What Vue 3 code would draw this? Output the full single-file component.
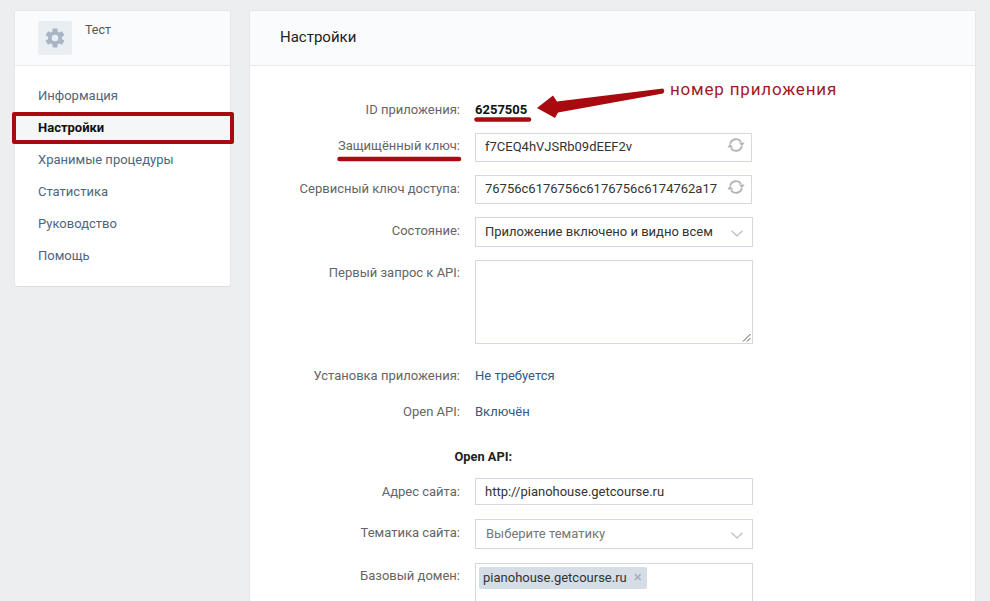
<script setup>
const nav = [
  { label: 'Информация' },
  { label: 'Настройки', active: true },
  { label: 'Хранимые процедуры' },
  { label: 'Статистика' },
  { label: 'Руководство' },
  { label: 'Помощь' },
]
</script>

<template>
  <div class="page">
    <aside class="side">
      <div class="side-head">
        <div class="app-icon">
          <svg width="20" height="20" viewBox="0 0 18 18">
            <g fill="#a8b5c4">
              <rect x="6.800" y="0.500" width="4.400" height="17" rx=".6"/>
              <rect x="6.800" y="0.500" width="4.400" height="17" rx=".6" transform="rotate(60 9 9)"/>
              <rect x="6.800" y="0.500" width="4.400" height="17" rx=".6" transform="rotate(120 9 9)"/>
              <circle cx="9" cy="9" r="6.300"/>
            </g>
            <circle cx="9" cy="9" r="3" fill="#e9eef3"/>
          </svg>
        </div>
        <div class="app-name">Тест</div>
      </div>
      <nav class="nav">
        <div v-for="n in nav" :key="n.label" class="nav-item" :class="{ active: n.active }">{{ n.label }}</div>
      </nav>
    </aside>

    <main class="card">
      <div class="card-head">Настройки</div>
      <div class="form">
        <div class="row r-id">
          <div class="lab">ID приложения:</div>
          <div class="val strong">6257505</div>
        </div>
        <div class="row r-key">
          <div class="lab">Защищённый ключ:</div>
          <div class="field">
            <span>f7CEQ4hVJSRb09dEEF2v</span>
            <svg class="refresh" width="18" height="16" viewBox="0 0 18 16"><path d="M3.200 6.800A6 6 0 0 1 14 4.800" fill="none" stroke="#b0b4b8" stroke-width="1.900"/><path d="M11.800 5.600H17.600L15 9.200Z" fill="#b0b4b8"/><path d="M14.800 9.200A6 6 0 0 1 4 11.200" fill="none" stroke="#b0b4b8" stroke-width="1.900"/><path d="M6.200 10.400H.4L3 6.800Z" fill="#b0b4b8"/></svg>
          </div>
        </div>
        <div class="row r-key">
          <div class="lab">Сервисный ключ доступа:</div>
          <div class="field">
            <span class="clip">76756c6176756c6176756c6174762a17</span>
            <svg class="refresh" width="18" height="16" viewBox="0 0 18 16"><path d="M3.200 6.800A6 6 0 0 1 14 4.800" fill="none" stroke="#b0b4b8" stroke-width="1.900"/><path d="M11.800 5.600H17.600L15 9.200Z" fill="#b0b4b8"/><path d="M14.800 9.200A6 6 0 0 1 4 11.200" fill="none" stroke="#b0b4b8" stroke-width="1.900"/><path d="M6.200 10.400H.4L3 6.800Z" fill="#b0b4b8"/></svg>
          </div>
        </div>
        <div class="row r-key">
          <div class="lab">Состояние:</div>
          <div class="field select">
            <span>Приложение включено и видно всем</span>
            <svg class="chev" width="12" height="7" viewBox="0 0 12 7" fill="none" stroke="#b4bcc6" stroke-width="1.200"><path d="M.5.800 6 6l5.500-5.200"/></svg>
          </div>
        </div>
        <div class="row r-area">
          <div class="lab">Первый запрос к API:</div>
          <div class="area">
            <svg class="grip" width="9" height="9" viewBox="0 0 9 9" stroke="#555" stroke-width="1"><path d="M1 8.500 8.500 1M5 8.500 8.500 5"/></svg>
          </div>
        </div>
        <div class="row r-install">
          <div class="lab">Установка приложения:</div>
          <div class="val link">Не требуется</div>
        </div>
        <div class="row r-open">
          <div class="lab">Open API:</div>
          <div class="val link">Включён</div>
        </div>
        <div class="section">Open API:</div>
        <div class="row r-addr">
          <div class="lab">Адрес сайта:</div>
          <div class="field short">http://pianohouse.getcourse.ru</div>
        </div>
        <div class="row r-theme">
          <div class="lab">Тематика сайта:</div>
          <div class="field select placeholder">
            <span>Выберите тематику</span>
            <svg class="chev" width="12" height="7" viewBox="0 0 12 7" fill="none" stroke="#b4bcc6" stroke-width="1.200"><path d="M.5.800 6 6l5.500-5.200"/></svg>
          </div>
        </div>
        <div class="row r-domain">
          <div class="lab">Базовый домен:</div>
          <div class="tags">
            <span class="tag">pianohouse.getcourse.ru<span class="x">×</span></span>
          </div>
        </div>
      </div>
    </main>

    <svg class="marks" width="990" height="601" viewBox="0 0 990 601">
      <path fill="#a80a10" d="M537 108 553 95.500 557 101.500 663 88.500Q665.500 91 663 93.500L558 112.500 555 118Z"/>
      <path d="M476.500 119.500H529" stroke="#a80a10" stroke-width="4.500" stroke-linecap="round" fill="none"/>
      <path d="M339.500 159H459" stroke="#a80a10" stroke-width="4.500" stroke-linecap="round" fill="none"/>
    </svg>
    <div class="note">номер приложения</div>
  </div>
</template>

<style>
html, body { margin: 0; height: 601px; overflow: hidden; background: #edeef0; }
</style>

<style scoped>
.page {
  position: relative;
  width: 990px;
  height: 601px;
  overflow: hidden;
  background: #edeef0;
  display: flex;
  align-items: flex-start;
  gap: 20px;
  padding: 11px 15px 0;
  box-sizing: border-box;
  font-family: Roboto, "Liberation Sans", sans-serif;
  font-size: 12.500px;
  color: #222;
}
.side {
  width: 215px;
  flex: none;
  background: #fff;
  border-radius: 2px;
  box-shadow: 0 1px 0 0 #dcdee2, 0 0 0 1px #e5e7ea;
}
.side-head {
  height: 55px;
  box-sizing: border-box;
  background: #fafbfc;
  border-bottom: 1px solid #e7e8ec;
  display: flex;
  gap: 13px;
  padding: 10px 0 0 23px;
}
.app-icon {
  width: 34px;
  height: 34px;
  background: #e9eef3;
  border-radius: 2px;
  display: flex;
  align-items: center;
  justify-content: center;
}
.app-name { color: #555; line-height: 17px; }
.nav { padding: 14px 0; }
.nav-item {
  position: relative;
  height: 32px;
  line-height: 32px;
  padding-left: 23px;
  color: #4d6680;
  font-size: 13px;
}
.nav-item.active {
  background: #f5f6f8;
  color: #111;
  font-weight: 700;
}
.nav-item.active::after {
  content: "";
  position: absolute;
  left: -3px;
  right: -4px;
  top: 0;
  height: 32px;
  box-sizing: border-box;
  border: 4px solid #a80a10;
  border-radius: 2px;
}
.card {
  width: 725px;
  flex: none;
  height: 640px;
  background: #fff;
  border-radius: 2px;
  box-shadow: 0 0 0 1px #e5e7ea;
}
.card-head {
  height: 55px;
  box-sizing: border-box;
  background: #fafbfc;
  border-bottom: 1px solid #e7e8ec;
  padding-left: 30px;
  line-height: 53px;
  font-size: 15px;
  color: #222;
}
.form { display: flex; flex-direction: column; }
.row { display: flex; gap: 15px; align-items: flex-start; }
.lab {
  width: 210px;
  flex: none;
  text-align: right;
  color: #656565;
  font-size: 13px;
  line-height: 16px;
  padding-top: 6px;
}
.val { line-height: 16px; padding-top: 6px; font-size: 13px; }
.strong { font-weight: 700; color: #111; }
.link { color: #35597f; }
.field {
  width: 277px;
  height: 29px;
  box-sizing: border-box;
  border: 1px solid #d3d9de;
  background: #fff;
  padding: 0 9px 2px;
  display: flex;
  align-items: center;
  justify-content: space-between;
  font-size: 13px;
  color: #333;
  white-space: nowrap;
  overflow: hidden;
}
.clip { width: 236px; flex: none; }
.refresh { flex: none; margin: -3px -3px 0 -4px; }
.select { width: 278px; }
.chev { flex: none; margin-top: 4px; }
.r-id { margin-top: 30px; height: 29px; }
.r-key { margin-top: 13px; height: 29px; }
.r-key:nth-child(2) .lab, .r-domain .lab { padding-top: 5px; }
.r-key:nth-child(2) { margin-top: 8px; }
.r-key:nth-child(4) { height: 30px; }
.r-key:nth-child(4) .field { height: 30px; }
.r-area { margin-top: 13px; }
.r-area .lab { padding-top: 5px; }
.area {
  position: relative;
  width: 278px;
  height: 84px;
  box-sizing: border-box;
  border: 1px solid #d3d9de;
  background: #fff;
}
.grip { position: absolute; right: 1px; bottom: 1px; }
.r-install { margin-top: 18px; height: 30px; }
.r-open { margin-top: 6px; height: 30px; }
.section {
  margin-top: 13px;
  width: 262px;
  text-align: right;
  font-weight: 700;
  font-size: 12.800px;
  color: #222;
  line-height: 16px;
  padding-top: 8px;
}
.r-addr { margin-top: 13px; }
.short { width: 278px; height: 27px; padding-bottom: 0; padding-left: 9px; }
.r-theme { margin-top: 14px; }
.r-theme .field { height: 30px; padding-left: 10px; }
.placeholder { color: #777; }
.r-domain { margin-top: 14px; }
.tags {
  width: 278px;
  height: 60px;
  box-sizing: border-box;
  border: 1px solid #d3d9de;
  padding: 3px;
}
.tag {
  display: inline-block;
  height: 22px;
  line-height: 21px;
  padding: 0 4px;
  background: #d5dde6;
  border-radius: 2px;
  font-size: 13px;
  color: #333;
}
.x { color: #a3aeba; font-size: 15px; margin-left: 7px; margin-right: 1px; }
.marks { position: absolute; left: 0; top: 0; pointer-events: none; }
.note {
  position: absolute;
  left: 670px;
  top: 78px;
  font-size: 17px;
  line-height: 22px;
  letter-spacing: .8px;
  color: #a1191f;
  white-space: nowrap;
}
</style>
